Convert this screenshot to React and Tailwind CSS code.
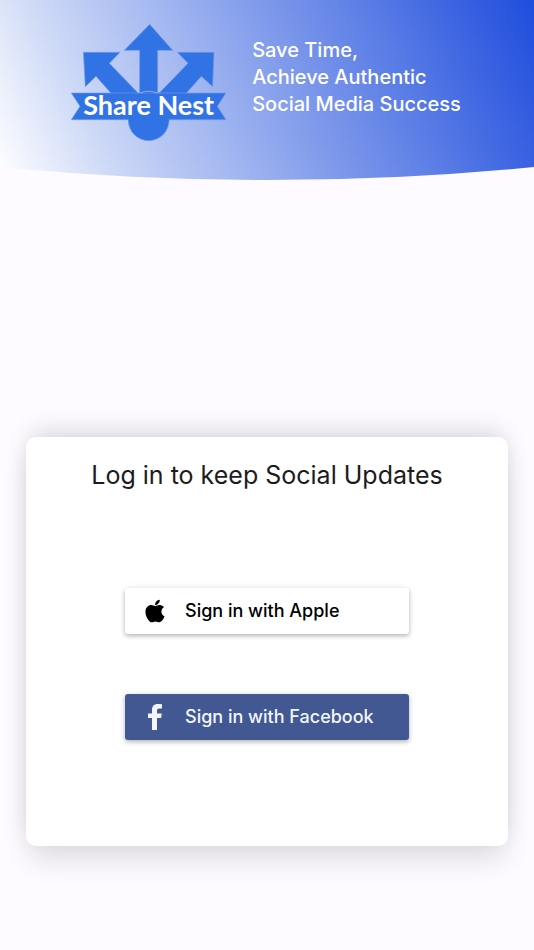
import React from "react";

function Logo() {
  return (
    <svg viewBox="33 27 465 351" className="h-[117px] w-[155px] shrink-0" role="img" aria-label="Share Nest">
      <g fill="#3173e5" stroke="#6f9bea" strokeWidth="2">
        <circle cx="266" cy="316" r="61" />
        <path d="M70 112H180L148 145L240 240H158L108 184L76 215Z" />
        <path d="M462 112H352L384 145L292 240H374L424 184L458 215Z" />
        <path d="M269 28L338 106H293V240H239V106H193Z" />
        <path d="M34 234H498L472 274L498 314H34L60 274Z" />
      </g>
      <path d="M206 305H326V320H206Z" fill="#3173e5" />
      <path d="M240 234Q266 224 292 234" fill="#3173e5" stroke="#8db0f0" strokeWidth="3" />
      <text x="266" y="301" textAnchor="middle" fill="#ffffff" fontSize="81" className="font-['Lato',sans-serif] font-bold">
        Share Nest
      </text>
    </svg>
  );
}

function AppleIcon() {
  return (
    <svg viewBox="0 0 384 512" className="h-[26px] w-5" fill="currentColor" aria-hidden="true">
      <path d="M318.7 268.7c-.2-36.7 16.4-64.4 50-84.8-18.8-26.9-47.2-41.7-84.7-44.600-35.500-2.800-74.300 20.700-88.500 20.700-15 0-49.400-19.700-76.400-19.700C63.300 141.200 4 184.800 4 273.500q0 39.300 14.400 81.200c12.800 36.700 59 126.700 107.200 125.200 25.200-.6 43-17.900 75.800-17.900 31.800 0 48.300 17.900 76.400 17.900 48.600-.7 90.400-82.500 102.600-119.300-65.200-30.700-61.700-90-61.700-91.900zm-56.600-164.200c27.300-32.400 24.800-61.900 24-72.500-24.100 1.400-52 16.400-67.900 34.900-17.500 19.800-27.800 44.300-25.600 71.900 26.100 2 49.900-11.400 69.500-34.300z" />
    </svg>
  );
}

function FacebookIcon() {
  return (
    <svg viewBox="0 0 14 26" className="h-[26px] w-[14px]" fill="currentColor" aria-hidden="true">
      <path d="M4 26V14H0V9.500H4V6C4 2 6.200 0 9.800 0C11.600 0 13.300.1 14 .2V4.500H11.500C9.600 4.500 9 5.400 9 6.800V9.500H13.800L13.100 14H9V26Z" />
    </svg>
  );
}

function SignInButton({ icon, label, tone }) {
  return (
    <button
      type="button"
      className={`flex h-[46px] w-full cursor-pointer items-center rounded-[3px] text-left text-lg font-medium shadow-[0_2px_4px_rgba(40,25,50,0.3),0_0_8px_rgba(40,25,50,0.06)] ${tone}`}
    >
      <span className="flex w-[60px] shrink-0 justify-center">{icon}</span>
      {label}
    </button>
  );
}

export default function App() {
  return (
    <div className="flex min-h-screen flex-col bg-[#fdfbff] font-['Inter',sans-serif]">
      <header className="flex h-[180px] items-start justify-center gap-[26px] bg-[linear-gradient(66deg,#ffffff,#cfdaf7_18%,#1f4ddd)] pt-6 pr-0.5 [clip-path:ellipse(515%_1527%_at_50%_-1427%)]">
        <Logo />
        <p className="pt-[13px] text-xl leading-[27px] font-medium text-white">
          Save Time,
          <br />
          Achieve Authentic
          <br />
          Social Media Success
        </p>
      </header>
      <main className="mx-[26px] mt-auto mb-[104px] flex flex-col items-center rounded-[10px] bg-white pt-5 pb-[106px] shadow-[0_-10px_24px_-6px_rgba(30,20,35,0.17),0_16px_28px_-4px_rgba(30,20,35,0.14)]">
        <h1 className="text-[25px] leading-9 text-[#1d1b20]">Log in to keep Social Updates</h1>
        <div className="mt-[95px] flex w-full max-w-[284px] flex-col gap-[60px]">
          <SignInButton icon={<AppleIcon />} label="Sign in with Apple" tone="bg-white text-black" />
          <SignInButton icon={<FacebookIcon />} label="Sign in with Facebook" tone="bg-[#415893] text-[#f3f5fb]" />
        </div>
      </main>
    </div>
  );
}
